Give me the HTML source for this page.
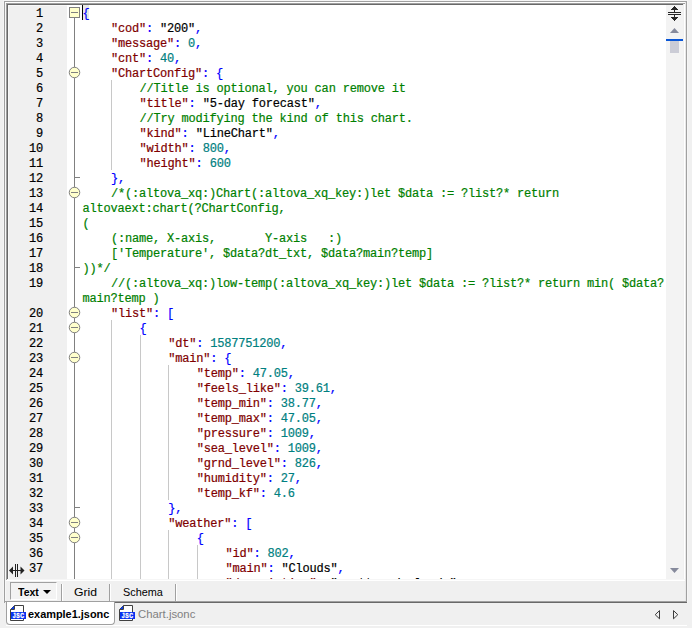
<!DOCTYPE html>
<html><head><meta charset="utf-8"><title>example1.jsonc</title>
<style>
html,body{margin:0;padding:0}
body{width:692px;height:628px;background:#f0f0f0;position:relative;overflow:hidden;font-family:"Liberation Sans",sans-serif;font-size:12px;color:#000}
div,span,i{box-sizing:border-box}
.abs,.ln,.cl,.fbox,.fcir,.ftick,.ig{position:absolute}
/* outer frame */
#fl{left:4px;top:1px;width:1px;height:602px;background:#a0a0a0}
#ft{left:4px;top:1px;width:683px;height:1px;background:#a0a0a0}
#fr{left:686px;top:1px;width:1px;height:602px;background:#a0a0a0}
#fr2{left:685px;top:2px;width:1px;height:599px;background:#e8e8e8}
#hl-l{left:3px;top:0;width:1px;height:603px;background:#f5f5f5}
#hl-t{left:3px;top:0;width:685px;height:1px;background:#f5f5f5}
#hl-r{left:687px;top:0;width:1px;height:603px;background:#f5f5f5}
#in-l{left:5px;top:2px;width:1px;height:599px;background:#f8f8f8}
#in-t{left:5px;top:2px;width:680px;height:1px;background:#fff}
/* sunken editor border */
#s-t1{left:6px;top:3px;width:679px;height:1px;background:#a0a0a0}
#s-t2{left:7px;top:4px;width:676px;height:1px;background:#696969}
#s-l1{left:6px;top:3px;width:1px;height:577px;background:#a0a0a0}
#s-l2{left:7px;top:4px;width:1px;height:575px;background:#696969}
#s-r{left:684px;top:4px;width:1px;height:577px;background:#fff}
#s-b1{left:7px;top:579px;width:678px;height:1px;background:#f6f6f6}
#s-b2{left:6px;top:580px;width:679px;height:1px;background:#fff}
#ed{left:0;top:0;width:692px;height:579px;overflow:hidden}
#margin{left:8px;top:5px;width:59px;height:574px;background:#f0f0f0;border-left:1px solid #f8f8f8;border-top:1px solid #f8f8f8}
#white{left:67px;top:5px;width:599px;height:574px;background:#fff}
.ln{left:9px;width:34px;text-align:right;height:15px;line-height:15px;font-family:"Liberation Mono",monospace;font-size:12px;letter-spacing:-0.2px;color:#000;padding-top:2px;-webkit-text-stroke:0.2px}
.cl{height:15px;line-height:15px;white-space:pre;font-family:"Liberation Mono",monospace;font-size:12px;letter-spacing:-0.2px;padding-top:2px;-webkit-text-stroke:0.2px}
.k{color:#800000}.p{color:#0000ff}.s{color:#000}.n{color:#008080}.c{color:#008000}
#foldline{left:74px;top:18px;width:1px;height:561px;background:#808080}
.fbox{left:69px;width:11px;height:11px;border:1px solid #808080;background:#ffffcc}
.fcir{left:69px;width:11px;height:11px;border:1px solid #808080;border-radius:50%;background:#ffffcc}
.fbox i,.fcir i{position:absolute;left:1px;top:4px;width:7px;height:1px;background:#808080}
.ftick{left:75px;width:5px;height:1px;background:#808080}
.ig{width:1px;background:#c8c8c8}
#caret{left:82px;top:5px;width:1px;height:15px;background:#000}
#bracehl{left:83px;top:5px;width:6px;height:15px;background:#e8e8e8}
/* scrollbar */
#sb{left:666px;top:5px;width:17px;height:574px;background:#f3f3f3}
#sb-edge{left:683px;top:5px;width:1px;height:574px;background:#f0f0f0}
#thumbline{left:666px;top:39px;width:17px;height:2px;background:#0a56d6}
#thumb{left:670px;top:41px;width:9px;height:12px;background:#cbccd6}
/* view tabs */
#vt-text{left:10px;top:582px;width:47px;height:18px;border-top:1px solid #a0a0a0;border-left:1px solid #a0a0a0;border-right:1px solid #fff;border-bottom:1px solid #fff;background:#f3f3f3}
.vsep{width:2px;height:17px;top:584px;border-left:1px solid #a0a0a0;background:#fff}
.vlab{top:585px;height:14px;line-height:14px;white-space:nowrap;font-size:11.5px;transform-origin:0 0}
/* bottom lines */
#b1{left:5px;top:601px;width:682px;height:1px;background:#a0a0a0}
#b2{left:115px;top:602px;width:572px;height:1px;background:#696969}
#b3{left:6px;top:625px;width:681px;height:1px;background:#fff}
#atab{left:6px;top:602px;width:109px;height:23px;background:#fff;border:1px solid #a0a0a0;border-top:none;border-radius:0 0 4px 4px}
.flab{top:607px;height:15px;line-height:15px;white-space:nowrap;font-size:11.5px;transform-origin:0 0}
svg{position:absolute;overflow:visible}
</style></head><body>
<div class="abs" id="hl-l"></div><div class="abs" id="hl-t"></div><div class="abs" id="hl-r"></div>
<div class="abs" id="fl"></div><div class="abs" id="ft"></div><div class="abs" id="fr"></div><div class="abs" id="fr2"></div>
<div class="abs" id="in-l"></div><div class="abs" id="in-t"></div>
<div class="abs" id="ed">
<div class="abs" id="margin"></div>
<div class="abs" id="white"></div>
<div class="abs" id="sb"></div><div class="abs" id="sb-edge"></div>
<div class="abs" id="thumbline"></div><div class="abs" id="thumb"></div>
<div class="abs" id="foldline"></div>
<div class="abs" id="bracehl"></div><div class="abs" id="caret"></div>
<div class="ln" style="top:5px">1</div>
<div class="ln" style="top:20px">2</div>
<div class="ln" style="top:35px">3</div>
<div class="ln" style="top:50px">4</div>
<div class="ln" style="top:65px">5</div>
<div class="ln" style="top:80px">6</div>
<div class="ln" style="top:95px">7</div>
<div class="ln" style="top:110px">8</div>
<div class="ln" style="top:125px">9</div>
<div class="ln" style="top:140px">10</div>
<div class="ln" style="top:155px">11</div>
<div class="ln" style="top:170px">12</div>
<div class="ln" style="top:185px">13</div>
<div class="ln" style="top:200px">14</div>
<div class="ln" style="top:215px">15</div>
<div class="ln" style="top:230px">16</div>
<div class="ln" style="top:245px">17</div>
<div class="ln" style="top:260px">18</div>
<div class="ln" style="top:275px">19</div>
<div class="ln" style="top:305px">20</div>
<div class="ln" style="top:320px">21</div>
<div class="ln" style="top:335px">22</div>
<div class="ln" style="top:350px">23</div>
<div class="ln" style="top:365px">24</div>
<div class="ln" style="top:380px">25</div>
<div class="ln" style="top:395px">26</div>
<div class="ln" style="top:410px">27</div>
<div class="ln" style="top:425px">28</div>
<div class="ln" style="top:440px">29</div>
<div class="ln" style="top:455px">30</div>
<div class="ln" style="top:470px">31</div>
<div class="ln" style="top:485px">32</div>
<div class="ln" style="top:500px">33</div>
<div class="ln" style="top:515px">34</div>
<div class="ln" style="top:530px">35</div>
<div class="ln" style="top:545px">36</div>
<div class="ln" style="top:560px">37</div>
<div class="fbox" style="top:7px"><i></i></div>
<svg width="14" height="15" style="left:68px;top:65px" viewBox="0 0 14 15"><circle cx="6.5" cy="7.5" r="5.25" fill="#ffffcc" stroke="#808080"/><rect x="3" y="7" width="7" height="1" fill="#808080"/></svg>
<div class="ftick" style="top:177px"></div>
<svg width="14" height="15" style="left:68px;top:185px" viewBox="0 0 14 15"><circle cx="6.5" cy="7.5" r="5.25" fill="#ffffcc" stroke="#808080"/><rect x="3" y="7" width="7" height="1" fill="#808080"/></svg>
<div class="ftick" style="top:267px"></div>
<svg width="14" height="15" style="left:68px;top:305px" viewBox="0 0 14 15"><circle cx="6.5" cy="7.5" r="5.25" fill="#ffffcc" stroke="#808080"/><rect x="3" y="7" width="7" height="1" fill="#808080"/></svg>
<svg width="14" height="15" style="left:68px;top:320px" viewBox="0 0 14 15"><circle cx="6.5" cy="7.5" r="5.25" fill="#ffffcc" stroke="#808080"/><rect x="3" y="7" width="7" height="1" fill="#808080"/></svg>
<svg width="14" height="15" style="left:68px;top:350px" viewBox="0 0 14 15"><circle cx="6.5" cy="7.5" r="5.25" fill="#ffffcc" stroke="#808080"/><rect x="3" y="7" width="7" height="1" fill="#808080"/></svg>
<div class="ftick" style="top:507px"></div>
<svg width="14" height="15" style="left:68px;top:515px" viewBox="0 0 14 15"><circle cx="6.5" cy="7.5" r="5.25" fill="#ffffcc" stroke="#808080"/><rect x="3" y="7" width="7" height="1" fill="#808080"/></svg>
<svg width="14" height="15" style="left:68px;top:530px" viewBox="0 0 14 15"><circle cx="6.5" cy="7.5" r="5.25" fill="#ffffcc" stroke="#808080"/><rect x="3" y="7" width="7" height="1" fill="#808080"/></svg>
<div class="ig" style="left:111px;top:80px;height:90px"></div><div class="ig" style="left:111px;top:320px;height:259px"></div><div class="ig" style="left:140px;top:335px;height:244px"></div><div class="ig" style="left:168px;top:365px;height:135px"></div><div class="ig" style="left:168px;top:530px;height:49px"></div><div class="ig" style="left:197px;top:545px;height:34px"></div>
<div class="cl" style="top:5px;left:82.4px"><span class="p">{</span></div>
<div class="cl" style="top:20px;left:111.0px"><span class="k">"cod"</span><span class="p">:</span><span class="s"> "200"</span><span class="p">,</span></div>
<div class="cl" style="top:35px;left:111.0px"><span class="k">"message"</span><span class="p">:</span><span class="n"> 0</span><span class="p">,</span></div>
<div class="cl" style="top:50px;left:111.0px"><span class="k">"cnt"</span><span class="p">:</span><span class="n"> 40</span><span class="p">,</span></div>
<div class="cl" style="top:65px;left:111.0px"><span class="k">"ChartConfig"</span><span class="p">: {</span></div>
<div class="cl" style="top:80px;left:139.6px"><span class="c">//Title is optional, you can remove it</span></div>
<div class="cl" style="top:95px;left:139.6px"><span class="k">"title"</span><span class="p">:</span><span class="s"> "5-day forecast"</span><span class="p">,</span></div>
<div class="cl" style="top:110px;left:139.6px"><span class="c">//Try modifying the kind of this chart.</span></div>
<div class="cl" style="top:125px;left:139.6px"><span class="k">"kind"</span><span class="p">:</span><span class="s"> "LineChart"</span><span class="p">,</span></div>
<div class="cl" style="top:140px;left:139.6px"><span class="k">"width"</span><span class="p">:</span><span class="n"> 800</span><span class="p">,</span></div>
<div class="cl" style="top:155px;left:139.6px"><span class="k">"height"</span><span class="p">:</span><span class="n"> 600</span></div>
<div class="cl" style="top:170px;left:111.0px"><span class="p">},</span></div>
<div class="cl" style="top:185px;left:111.0px"><span class="c">/*(:altova_xq:)Chart(:altova_xq_key:)let $data := ?list?* return</span></div>
<div class="cl" style="top:200px;left:82.4px"><span class="c">altovaext:chart(?ChartConfig,</span></div>
<div class="cl" style="top:215px;left:82.4px"><span class="c">(</span></div>
<div class="cl" style="top:230px;left:111.0px"><span class="c">(:name, X-axis,       Y-axis   :)</span></div>
<div class="cl" style="top:245px;left:111.0px"><span class="c">['Temperature', $data?dt_txt, $data?main?temp]</span></div>
<div class="cl" style="top:260px;left:82.4px"><span class="c">))*/</span></div>
<div class="cl" style="top:275px;left:111.0px"><span class="c">//(:altova_xq:)low-temp(:altova_xq_key:)let $data := ?list?* return min( $data?</span></div>
<div class="cl" style="top:290px;left:82.4px"><span class="c">main?temp )</span></div>
<div class="cl" style="top:305px;left:111.0px"><span class="k">"list"</span><span class="p">: [</span></div>
<div class="cl" style="top:320px;left:139.6px"><span class="p">{</span></div>
<div class="cl" style="top:335px;left:168.2px"><span class="k">"dt"</span><span class="p">:</span><span class="n"> 1587751200</span><span class="p">,</span></div>
<div class="cl" style="top:350px;left:168.2px"><span class="k">"main"</span><span class="p">: {</span></div>
<div class="cl" style="top:365px;left:196.8px"><span class="k">"temp"</span><span class="p">:</span><span class="n"> 47.05</span><span class="p">,</span></div>
<div class="cl" style="top:380px;left:196.8px"><span class="k">"feels_like"</span><span class="p">:</span><span class="n"> 39.61</span><span class="p">,</span></div>
<div class="cl" style="top:395px;left:196.8px"><span class="k">"temp_min"</span><span class="p">:</span><span class="n"> 38.77</span><span class="p">,</span></div>
<div class="cl" style="top:410px;left:196.8px"><span class="k">"temp_max"</span><span class="p">:</span><span class="n"> 47.05</span><span class="p">,</span></div>
<div class="cl" style="top:425px;left:196.8px"><span class="k">"pressure"</span><span class="p">:</span><span class="n"> 1009</span><span class="p">,</span></div>
<div class="cl" style="top:440px;left:196.8px"><span class="k">"sea_level"</span><span class="p">:</span><span class="n"> 1009</span><span class="p">,</span></div>
<div class="cl" style="top:455px;left:196.8px"><span class="k">"grnd_level"</span><span class="p">:</span><span class="n"> 826</span><span class="p">,</span></div>
<div class="cl" style="top:470px;left:196.8px"><span class="k">"humidity"</span><span class="p">:</span><span class="n"> 27</span><span class="p">,</span></div>
<div class="cl" style="top:485px;left:196.8px"><span class="k">"temp_kf"</span><span class="p">:</span><span class="n"> 4.6</span></div>
<div class="cl" style="top:500px;left:168.2px"><span class="p">},</span></div>
<div class="cl" style="top:515px;left:168.2px"><span class="k">"weather"</span><span class="p">: [</span></div>
<div class="cl" style="top:530px;left:196.8px"><span class="p">{</span></div>
<div class="cl" style="top:545px;left:225.4px"><span class="k">"id"</span><span class="p">:</span><span class="n"> 802</span><span class="p">,</span></div>
<div class="cl" style="top:560px;left:225.4px"><span class="k">"main"</span><span class="p">:</span><span class="s"> "Clouds"</span><span class="p">,</span></div>
<div class="cl" style="top:575px;left:225.4px"><span class="k">"description"</span><span class="p">:</span><span class="s"> "scattered clouds"</span><span class="p">,</span></div>
</div>
<div class="abs" id="s-t1"></div><div class="abs" id="s-t2"></div><div class="abs" id="s-l1"></div><div class="abs" id="s-l2"></div>
<div class="abs" id="s-r"></div><div class="abs" id="s-b1"></div><div class="abs" id="s-b2"></div>
<!-- scrollbar icons -->
<svg width="17" height="574" style="left:666px;top:5px" viewBox="0 0 17 574">
 <g fill="#262626" stroke="none">
  <rect x="8" y="1" width="1" height="1"/><rect x="7" y="2" width="3" height="1"/><rect x="6" y="3" width="5" height="1"/><rect x="5" y="4" width="7" height="1"/>
  <rect x="8" y="5" width="1" height="2"/><rect x="2" y="7" width="13" height="1"/><rect x="2" y="9" width="13" height="1"/><rect x="8" y="10" width="1" height="2"/>
  <rect x="5" y="12" width="7" height="1"/><rect x="6" y="13" width="5" height="1"/><rect x="7" y="14" width="3" height="1"/><rect x="8" y="15" width="1" height="1"/>
 </g>
 <path d="M8.5 23 L13 28 H4 Z" fill="#868a9c"/>
 <path d="M8.5 568 L13 563 H4 Z" fill="#868a9c"/>
</svg>
<!-- splitter icon -->
<svg width="16" height="14" style="left:9px;top:564px" viewBox="0 0 16 14">
 <g fill="#222"><rect x="6" y="0" width="1" height="13"/><rect x="8" y="0" width="1" height="13"/>
 <path d="M0 6.5 L4 2.5 V10.5 Z"/><path d="M15.5 6.5 L11.5 2.5 V10.5 Z"/><rect x="3" y="6" width="10" height="1"/></g>
</svg>
<!-- view tabs -->
<div class="abs" id="vt-text"></div>
<div class="abs vlab" id="l-text" style="left:18px;transform:scaleX(0.913);font-weight:bold">Text</div>
<svg width="8" height="4" style="left:43px;top:590px" viewBox="0 0 8 4"><path d="M0 0 H8 L4 4 Z" fill="#000"/></svg>
<div class="abs vsep" style="left:61px"></div>
<div class="abs vlab" id="l-grid" style="left:74.4px;transform:scaleX(1.06)">Grid</div>
<div class="abs vsep" style="left:109px"></div>
<div class="abs vlab" id="l-schema" style="left:123.3px;transform:scaleX(0.944)">Schema</div>
<div class="abs vsep" style="left:175px"></div>
<div class="abs" id="b1"></div><div class="abs" id="b2"></div><div class="abs" id="b3"></div>
<!-- file tabs -->
<div class="abs" id="atab"></div>
<svg width="17" height="16" style="left:10px;top:605px" viewBox="0 0 17 16">
 <path d="M4.5 0.5 H13.5 V15.5 H0.5 V4.5 Z" fill="#fff" stroke="#404040"/>
 <path d="M1 4 L4 1 V4 Z" fill="#0a3cf0"/><path d="M0.5 4.5 H4.5 V0.5" fill="none" stroke="#404040"/>
 <rect x="1" y="7" width="15" height="7" fill="#0a32f0"/>
 <text transform="scale(0.74 1)" x="3.6 8.6 13.9" y="13" font-family="Liberation Sans, sans-serif" font-weight="bold" font-size="7" fill="#fff" stroke="#fff" stroke-width="0.4">JSC</text>
</svg>
<div class="abs flab" id="l-f1" style="left:27.8px;transform:scaleX(0.949);font-weight:bold">example1.jsonc</div>
<svg width="17" height="16" style="left:119px;top:605px" viewBox="0 0 17 16">
 <path d="M4.5 0.5 H13.5 V15.5 H0.5 V4.5 Z" fill="#fff" stroke="#404040"/>
 <path d="M1 4 L4 1 V4 Z" fill="#0a3cf0"/><path d="M0.5 4.5 H4.5 V0.5" fill="none" stroke="#404040"/>
 <rect x="1" y="7" width="15" height="7" fill="#0a32f0"/>
 <text transform="scale(0.74 1)" x="3.6 8.6 13.9" y="13" font-family="Liberation Sans, sans-serif" font-weight="bold" font-size="7" fill="#fff" stroke="#fff" stroke-width="0.4">JSC</text>
</svg>
<div class="abs flab" id="l-f2" style="left:137.6px;transform:scaleX(0.986);color:#808080">Chart.jsonc</div>
<!-- nav arrows -->
<svg width="25" height="10" style="left:654px;top:610px" viewBox="0 0 25 10">
 <path d="M5.5 0.6 V8.8 L1.2 4.7 Z" fill="none" stroke="#3c3c3c" stroke-width="1"/>
 <path d="M19.5 0.6 V8.8 L23.8 4.7 Z" fill="none" stroke="#3c3c3c" stroke-width="1"/>
</svg>
</body></html>
